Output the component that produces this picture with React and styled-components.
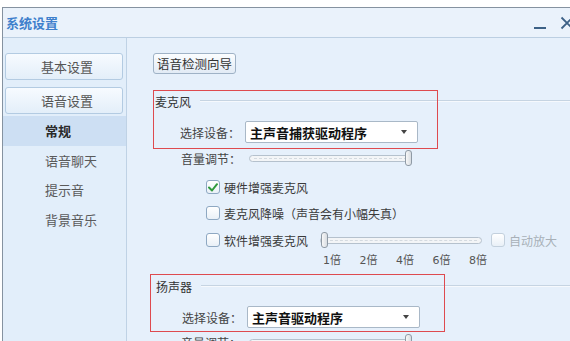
import React from "react"
import styled, { createGlobalStyle } from "styled-components"

const GlobalStyle = createGlobalStyle`
  html, body {
    margin: 0;
    padding: 0;
    background: #ffffff;
    font-family: "Noto Sans CJK SC", "Noto Sans", sans-serif;
    overflow: hidden;
  }
`

const Page = styled.div`
  width: 570px;
  height: 341px;
  padding: 7px 0 0 2px;
  box-sizing: border-box;
  overflow: hidden;
`
const Window = styled.div`
  height: 100%;
  border-left: 1px solid #8592a0;
  border-top: 1px solid #8592a0;
  display: flex;
  flex-direction: column;
  background: #e6f0fb;
`
const TitleBar = styled.div`
  height: 29px;
  flex: none;
  display: flex;
  align-items: center;
  padding-left: 3px;
  background: #eaf2fb;
  border-bottom: 1px solid #bccfe2;
`
const Title = styled.span`
  font-size: 13px;
  font-weight: 700;
  color: #3f80cc;
  flex: 1;
`
const WinButtons = styled.div`
  display: flex;
  align-items: center;
  gap: 14px;
  margin-right: -4px;
  & > svg {
    display: block;
    flex: none;
  }
`
const Body = styled.div`
  flex: 1;
  display: flex;
  min-height: 0;
`
const Sidebar = styled.div`
  width: 123px;
  flex: none;
  background: #e2eefa;
  border-right: 1px solid #bfd2e5;
  padding-top: 15px;
  display: flex;
  flex-direction: column;
`
const NavButton = styled.div`
  margin: 0 3px 7px 2px;
  height: 27px;
  box-sizing: border-box;
  border: 1px solid #b3cbe2;
  border-radius: 3px;
  background: linear-gradient(#f7fbff, #e3eef9);
  display: flex;
  align-items: center;
  justify-content: center;
  font-size: 13px;
  color: #555;
  padding-left: 6px;
`
const NavItem = styled.div`
  height: 29.5px;
  display: flex;
  align-items: center;
  padding-left: 42px;
  font-size: 13px;
  color: ${p => (p.$active ? "#2a2a2a" : "#5a5a5a")};
  font-weight: ${p => (p.$active ? 700 : 400)};
  background: ${p => (p.$active ? "#cddff3" : "transparent")};
  margin-top: ${p => p.$mt || 0}px;
`
const Content = styled.div`
  flex: 1;
  padding: 15px 0 0 26px;
  display: flex;
  flex-direction: column;
  overflow: hidden;
`
const WizardButton = styled.div`
  align-self: flex-start;
  height: 22px;
  box-sizing: border-box;
  padding: 0 3px;
  border: 1px solid #9fb2c6;
  border-radius: 3px;
  background: linear-gradient(#fbfdff, #e2ebf5);
  display: flex;
  align-items: center;
  font-size: 12.5px;
  color: #333;
`
const Group = styled.div`
  position: relative;
  margin-top: ${p => p.$mt}px;
  display: flex;
  flex-direction: column;
`
const Highlight = styled.div`
  position: absolute;
  left: ${p => p.$l}px;
  top: ${p => p.$t}px;
  width: ${p => p.$w}px;
  height: ${p => p.$h}px;
  border: 1.5px solid #de4a4f;
  box-sizing: border-box;
  pointer-events: none;
`
const GroupHeader = styled.div`
  height: 16px;
  display: flex;
  align-items: center;
  gap: 9px;
  padding-left: ${p => p.$pl}px;
  font-size: 12px;
  color: #333;
  &::after {
    content: "";
    flex: 1;
    height: 1px;
    background: #c6d4e2;
    border-bottom: 1px solid #f6f9fd;
  }
`
const Row = styled.div`
  display: flex;
  align-items: center;
  height: ${p => p.$h || 18}px;
  margin-top: ${p => p.$mt || 0}px;
  padding-left: ${p => p.$pl || 0}px;
  font-size: 12px;
  color: #3a3a3a;
`
const Label = styled.span`
  width: 65px;
  flex: none;
  color: #444;
`
const Select = styled.div`
  width: 173px;
  height: 22px;
  box-sizing: border-box;
  border: 1px solid #a9b8c7;
  border-radius: 2px;
  background: #fff;
  display: flex;
  align-items: center;
  padding: 0 10px 0 4px;
  font-size: 13px;
  font-weight: 700;
  color: #111;
  & > span {
    flex: 1;
  }
`
const Arrow = styled.i`
  width: 0;
  height: 0;
  border-left: 3px solid transparent;
  border-right: 3px solid transparent;
  border-top: 4px solid #444;
`
const Track = styled.div`
  position: relative;
  width: ${p => p.$w}px;
  height: 7px;
  flex: none;
  box-sizing: border-box;
  border: 1px solid #b5c1cd;
  border-radius: 4px;
  background: #f3f5f7;
  margin-left: ${p => p.$ml || 0}px;
  margin-right: ${p => p.$mr || 0}px;
  &::before {
    content: "";
    position: absolute;
    left: 4px;
    right: 4px;
    top: 2px;
    border-top: 1px dashed #d4dae0;
  }
`
const Thumb = styled.div`
  position: absolute;
  top: -6px;
  width: 7px;
  height: 16px;
  box-sizing: border-box;
  border: 1px solid #8f9aa5;
  border-radius: 3px;
  background: linear-gradient(90deg, #f8f8f8, #d8dde2);
`
const Check = styled.div`
  width: 14px;
  height: 14px;
  flex: none;
  box-sizing: border-box;
  border: 1px solid ${p => (p.$disabled ? "#c3d0dd" : "#8ea8c2")};
  border-radius: 3px;
  background: linear-gradient(#ffffff, #e9f0f7);
  margin-right: 4px;
  display: flex;
  align-items: center;
  justify-content: center;
`
const Muted = styled.span`
  color: #a8b0b8;
`
const Scale = styled.div`
  display: flex;
  margin-top: 2px;
  padding-left: 170px;
  height: 14px;
  font-size: 11px;
  color: #555;
  font-family: "DejaVu Sans", "Noto Sans CJK SC", sans-serif;
  & > span {
    width: 36.5px;
    flex: none;
  }
`

function Slider({ width, pos, ml, mr }) {
  return (
    <Track $w={width} $ml={ml} $mr={mr}>
      <Thumb style={{ left: pos }} />
    </Track>
  )
}

function CheckBox({ checked, disabled }) {
  return (
    <Check $disabled={disabled}>
      {checked && (
        <svg width="10" height="9" viewBox="0 0 10 9">
          <path d="M1 4.5 L4 7.5 L9 1.2" fill="none" stroke="#2f9a3c" strokeWidth="2" strokeLinecap="round" strokeLinejoin="round" />
        </svg>
      )}
    </Check>
  )
}

export default function App() {
  return (
    <Page>
      <GlobalStyle />
      <Window>
        <TitleBar>
          <Title>系统设置</Title>
          <WinButtons>
            <svg width="12" height="14" viewBox="0 0 12 14">
              <rect x="0" y="11" width="12" height="2" fill="#3d6186" />
            </svg>
            <svg width="14" height="14" viewBox="0 0 14 14">
              <path d="M1.5 1.5 L12.5 12.5 M12.5 1.5 L1.5 12.5" stroke="#3d6186" strokeWidth="1.8" />
            </svg>
          </WinButtons>
        </TitleBar>
        <Body>
          <Sidebar>
            <NavButton>基本设置</NavButton>
            <NavButton>语音设置</NavButton>
            <NavItem $active $mt={-5}>常规</NavItem>
            <NavItem>语音聊天</NavItem>
            <NavItem>提示音</NavItem>
            <NavItem>背景音乐</NavItem>
          </Sidebar>
          <Content>
            <WizardButton>语音检测向导</WizardButton>

            <Group $mt={19}>
              <Highlight $l={0} $t={-3} $w={285} $h={59} />
              <GroupHeader $pl={2}>麦克风</GroupHeader>
              <Row $h={22} $mt={12} $pl={27}>
                <Label>选择设备：</Label>
                <Select><span>主声音捕获驱动程序</span><Arrow /></Select>
              </Row>
              <Row $mt={6} $pl={28}>
                <Label>音量调节：</Label>
                <Slider width={163} pos={155} ml={3} />
              </Row>
              <Row $mt={11} $pl={53}>
                <CheckBox checked />硬件增强麦克风
              </Row>
              <Row $mt={8} $pl={53}>
                <CheckBox />麦克风降噪（声音会有小幅失真）
              </Row>
              <Row $mt={9} $pl={53}>
                <CheckBox />软件增强麦克风
                <Slider width={162} pos={0} ml={12} mr={9} />
                <CheckBox disabled />
                <Muted>自动放大</Muted>
              </Row>
              <Scale>
                <span>1倍</span><span>2倍</span><span>4倍</span><span>6倍</span><span>8倍</span>
              </Scale>
            </Group>

            <Group $mt={13}>
              <Highlight $l={-3} $t={-4} $w={295} $h={58} />
              <GroupHeader $pl={3}>扬声器</GroupHeader>
              <Row $h={22} $mt={12} $pl={29}>
                <Label>选择设备：</Label>
                <Select><span>主声音驱动程序</span><Arrow /></Select>
              </Row>
              <Row $mt={5} $pl={28}>
                <Label>音量调节：</Label>
                <Slider width={163} pos={155} ml={3} />
              </Row>
            </Group>
          </Content>
        </Body>
      </Window>
    </Page>
  )
}
